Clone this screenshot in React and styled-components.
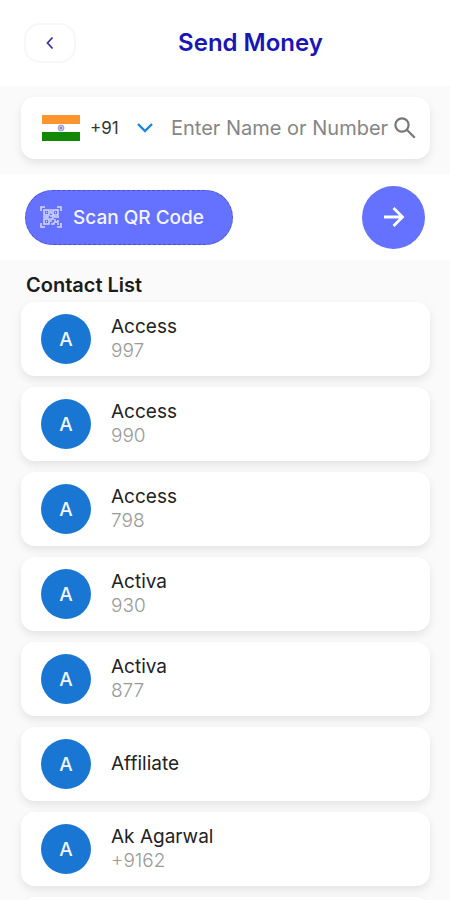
import React from 'react';
import styled, { createGlobalStyle } from 'styled-components';

const GlobalStyle = createGlobalStyle`
  * {
    box-sizing: border-box;
  }
  body {
    margin: 0;
    background: #fafafa;
    color: #1c1c1c;
    font-family: Inter, "Liberation Sans", sans-serif;
  }
  button, input, select {
    font-family: inherit;
  }
`;

const Screen = styled.div`
  height: 100vh;
  overflow: hidden;
`;

const Header = styled.header`
  display: grid;
  grid-template-columns: 52px 1fr;
  align-items: center;
  height: 86px;
  padding: 0 25px 0 24px;
  background: #fff;

  h1 {
    margin: 0;
    color: #1a16b4;
    font-size: 24px;
    font-weight: 600;
    line-height: 32px;
    text-align: center;
  }
`;

const BackButton = styled.button`
  display: flex;
  align-items: center;
  justify-content: center;
  width: 52px;
  height: 40px;
  padding: 0;
  border: 2px solid #f7f7f7;
  border-radius: 16px;
  background: #fff;
  color: #38349c;
`;

const Card = styled.div`
  display: flex;
  align-items: center;
  border-radius: 14px;
  background: #fff;
  box-shadow: 0 4px 8px rgba(0, 0, 0, 0.09);
`;

const SearchArea = styled.section`
  padding: 11px 20px 15px 21px;
`;

const SearchCard = styled(Card)`
  height: 62px;
  padding: 0 14px 0 21px;
`;

const CountryPicker = styled.label`
  display: flex;
  align-items: center;
  color: #1689dc;

  select {
    width: 34px;
    margin: 0 12px 0 10px;
    padding: 0;
    border: 0;
    appearance: none;
    background: transparent;
    color: #333;
    font-size: 17px;
    line-height: 24px;
  }
`;

const SearchInput = styled.input`
  flex: 1;
  min-width: 0;
  height: 40px;
  margin-left: 17px;
  padding: 0;
  border: 0;
  outline: 0;
  background: transparent;
  font-size: 20px;

  &::placeholder {
    color: #858585;
    opacity: 1;
  }
`;

const SearchButton = styled.button`
  display: flex;
  padding: 0;
  border: 0;
  background: transparent;
  color: #777;
`;

const Actions = styled.section`
  display: flex;
  align-items: center;
  justify-content: space-between;
  height: 86px;
  padding: 0 25px;
  background: #fff;
`;

const ScanButton = styled.button`
  display: flex;
  align-items: center;
  gap: 11px;
  height: 55px;
  padding: 0 28px 0 14px;
  border: 1px dashed #4b52cf;
  border-radius: 28px;
  background: #6571ff;
  color: #f4f5ff;
  font-size: 19px;
  font-weight: 500;
`;

const NextButton = styled.button`
  display: flex;
  align-items: center;
  justify-content: center;
  width: 63px;
  height: 63px;
  padding: 0;
  border: 0;
  border-radius: 50%;
  background: #6571ff;
  color: #fff;
`;

const Contacts = styled.section`
  padding: 13px 20px 0 21px;

  h2 {
    margin: 0 0 5px 5px;
    font-size: 20px;
    font-weight: 600;
    line-height: 24px;
  }

  ul {
    display: grid;
    gap: 11px;
    margin: 0;
    padding: 0;
    list-style: none;
  }
`;

const ContactCard = styled(Card)`
  gap: 20px;
  height: 74px;
  padding: 0 20px;
`;

const Avatar = styled.span`
  display: flex;
  align-items: center;
  justify-content: center;
  width: 50px;
  height: 50px;
  border-radius: 50%;
  background: #1976d2;
  color: #f2f7ff;
  font-size: 19px;
  font-weight: 500;
`;

const ContactName = styled.div`
  color: #222;
  font-size: 19px;
  line-height: 24px;
`;

const ContactNumber = styled.div`
  color: #999;
  font-size: 19px;
  font-weight: 300;
  line-height: 24px;
`;

const contacts = [
  { name: 'Access', number: '997' },
  { name: 'Access', number: '990' },
  { name: 'Access', number: '798' },
  { name: 'Activa', number: '930' },
  { name: 'Activa', number: '877' },
  { name: 'Affiliate' },
  { name: 'Ak Agarwal', number: '+9162' },
];

function Flag() {
  return (
    <svg width="38" height="26" viewBox="0 0 38 26" aria-hidden="true">
      <path fill="#fff" d="M0 0h38v26H0z" />
      <path fill="#fb962e" d="M0 0h38v9H0z" />
      <path fill="#128807" d="M0 17h38v9H0z" />
      <circle cx="19" cy="13" r="3" fill="#c5c5e8" stroke="#9a9ad2" />
      <circle cx="19" cy="13" r="1" fill="#6a6ab4" />
    </svg>
  );
}

function QrIcon() {
  return (
    <svg width="22" height="22" viewBox="0 0 22 22" fill="none" stroke="#d5d9ff" aria-hidden="true">
      <path strokeWidth="1.6" d="M1 5V1h4M17 1h4v4M21 17v4h-4M5 21H1v-4" />
      <path strokeWidth="1.5" d="M4 4h5v5H4zM13 4h5v5h-5zM4 13h5v5H4z" />
      <path strokeWidth="1.4" d="M6 6.5h1M15 6.5h1M6 15.5h1M11 3v4h1M3 11h5v-1M10 10h3v3h-2v3M14 11h5M15 13v3h3v-2M11 18h3v-2M17 18h2" />
    </svg>
  );
}

export default function App() {
  return (
    <Screen>
      <GlobalStyle />
      <Header>
        <BackButton aria-label="Back">
          <svg width="8" height="14" viewBox="0 0 8 14" fill="none" stroke="currentColor" strokeWidth="1.8">
            <path d="M6.5 1.5 1.5 7l5 5.5" />
          </svg>
        </BackButton>
        <h1>Send Money</h1>
      </Header>

      <SearchArea>
        <SearchCard>
          <CountryPicker>
            <Flag />
            <select aria-label="Country code" defaultValue="+91">
              <option>+91</option>
            </select>
            <svg width="18" height="12" viewBox="0 0 18 12" fill="none" stroke="currentColor" strokeWidth="2.4">
              <path d="m2 2 7 7 7-7" />
            </svg>
          </CountryPicker>
          <SearchInput aria-label="Name or number" placeholder="Enter Name or Number" />
          <SearchButton aria-label="Search">
            <svg width="22" height="22" viewBox="0 0 22 22" fill="none" stroke="currentColor" strokeWidth="2.2">
              <circle cx="8" cy="8" r="6.6" />
              <path d="m12.8 12.8 8 8" />
            </svg>
          </SearchButton>
        </SearchCard>
      </SearchArea>

      <Actions>
        <ScanButton>
          <QrIcon />
          Scan QR Code
        </ScanButton>
        <NextButton aria-label="Continue">
          <svg width="22" height="22" viewBox="0 0 22 22" fill="none" stroke="currentColor" strokeWidth="2.8">
            <path d="M1 11h18M10.5 2l9 9-9 9" />
          </svg>
        </NextButton>
      </Actions>

      <Contacts>
        <h2>Contact List</h2>
        <ul>
          {contacts.map(({ name, number }, i) => (
            <ContactCard as="li" key={i}>
              <Avatar>{name[0]}</Avatar>
              <div>
                <ContactName>{name}</ContactName>
                {number && <ContactNumber>{number}</ContactNumber>}
              </div>
            </ContactCard>
          ))}
          <ContactCard as="li" />
        </ul>
      </Contacts>
    </Screen>
  );
}
